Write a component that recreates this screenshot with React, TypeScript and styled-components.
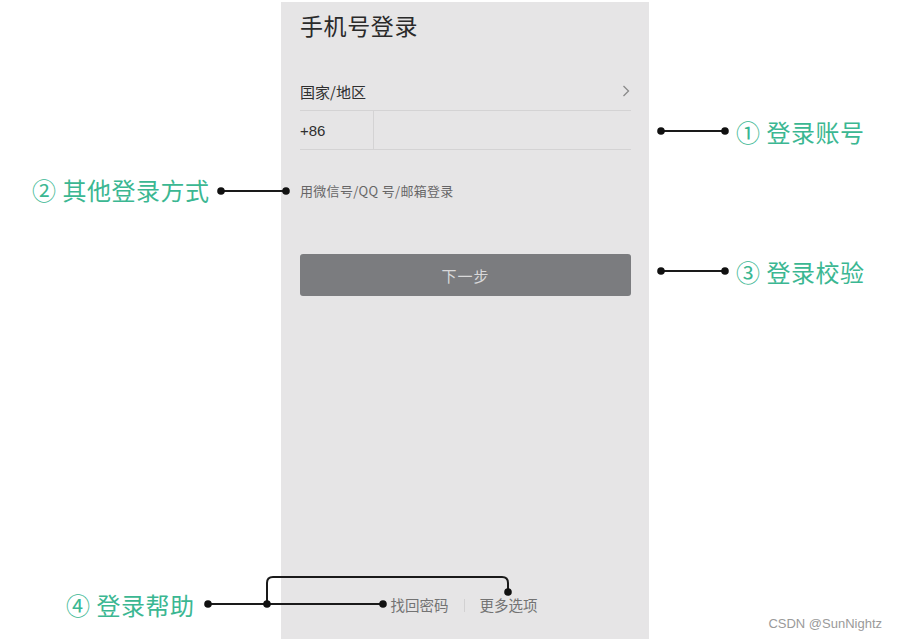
import styled, { createGlobalStyle } from 'styled-components';

const GlobalStyle = createGlobalStyle`
  html, body {
    margin: 0;
    padding: 0;
    background: #ffffff;
  }
`;

const SANS = '"Noto Sans CJK SC", "Noto Sans", sans-serif';

const Stage = styled.div`
  position: relative;
  width: 897px;
  height: 639px;
  overflow: hidden;
  display: grid;
  grid-template-columns: 281px 368px 1fr;
  font-family: ${SANS};
`;

const Panel = styled.section`
  grid-column: 2;
  margin-top: 2px;
  background: #e6e5e6;
  padding: 0 18px 0 19px;
  display: flex;
  flex-direction: column;
  color: #2f2f2f;
`;

const Title = styled.h1`
  margin: 10px 0 0;
  font-size: 23px;
  line-height: 26px;
  font-weight: 400;
  letter-spacing: 0.6px;
  color: #2a2a2a;
`;

const Row = styled.div`
  display: flex;
  align-items: center;
  height: 38px;
  border-bottom: 1px solid #d4d3d4;
  font-size: 15px;
`;

const CountryRow = styled(Row)`
  margin-top: 34px;
  justify-content: space-between;
  padding-right: 1px;
`;

const CodeCell = styled.div`
  width: 73px;
  height: 100%;
  display: flex;
  align-items: center;
  border-right: 1px solid #d4d3d4;
  font-family: "Liberation Sans", sans-serif;
`;

const AltLogin = styled.div`
  margin-top: 32px;
  font-size: 13px;
  line-height: 18px;
  color: #666566;
  letter-spacing: 0.3px;
`;

const NextButton = styled.button`
  margin-top: 54px;
  height: 42px;
  border: none;
  border-radius: 3px;
  background: #7b7c7f;
  color: #d9d9da;
  font-family: ${SANS};
  font-size: 15px;
  letter-spacing: 1px;
`;

const HelpRow = styled.div`
  margin-top: auto;
  margin-bottom: 24px;
  padding-right: 3px;
  display: flex;
  justify-content: center;
  align-items: center;
  gap: 15px;
  font-size: 14.5px;
  line-height: 20px;
  color: #737373;
`;

const Sep = styled.span`
  width: 1px;
  height: 13px;
  background: #d2d1d2;
`;

const Overlay = styled.svg`
  position: absolute;
  left: 0;
  top: 0;
  pointer-events: none;
`;

const Callout = styled.div<{ $x: number; $y: number }>`
  position: absolute;
  left: ${(p) => p.$x}px;
  top: ${(p) => p.$y}px;
  transform: translateY(-50%);
  font-size: 24px;
  line-height: 28px;
  font-weight: 400;
  color: #3bb792;
  white-space: nowrap;
  letter-spacing: 0.5px;
`;

const Watermark = styled.div`
  position: absolute;
  right: 15px;
  bottom: 8px;
  font-family: "Liberation Sans", sans-serif;
  font-size: 13px;
  color: #9a9a9a;
`;

const Chevron = () => (
  <svg width="8" height="12" viewBox="0 0 8 12">
    <polyline points="1.5,1 6.5,6 1.5,11" fill="none" stroke="#8a8a8a" strokeWidth="1.3" />
  </svg>
);

const dots: [number, number][] = [
  [661, 131], [725, 131],
  [221, 191], [286, 191],
  [661, 271], [725, 271],
  [208, 604], [267, 604], [383, 604], [508, 592],
];

const Connectors = () => (
  <Overlay width={897} height={639}>
    <g stroke="#1a1a1a" strokeWidth="2" fill="none">
      <line x1={661} y1={131} x2={725} y2={131} />
      <line x1={221} y1={191} x2={286} y2={191} />
      <line x1={661} y1={271} x2={725} y2={271} />
      <line x1={208} y1={604} x2={383} y2={604} />
      <path d="M267 604 V583 Q267 577 273 577 H502 Q508 577 508 583 V592" />
    </g>
    {dots.map(([x, y]) => (
      <circle key={`${x}-${y}`} cx={x} cy={y} r={3.8} fill="#111" />
    ))}
  </Overlay>
);

export default function App() {
  return (
    <>
      <GlobalStyle />
      <Stage>
        <Panel>
          <Title>手机号登录</Title>
          <CountryRow>
            <span>国家/地区</span>
            <Chevron />
          </CountryRow>
          <Row>
            <CodeCell>+86</CodeCell>
          </Row>
          <AltLogin>用微信号/QQ 号/邮箱登录</AltLogin>
          <NextButton>下一步</NextButton>
          <HelpRow>
            <span>找回密码</span>
            <Sep />
            <span>更多选项</span>
          </HelpRow>
        </Panel>
        <Connectors />
        <Callout $x={736} $y={132}>① 登录账号</Callout>
        <Callout $x={32} $y={190}>② 其他登录方式</Callout>
        <Callout $x={736} $y={272}>③ 登录校验</Callout>
        <Callout $x={66} $y={605}>④ 登录帮助</Callout>
        <Watermark>CSDN @SunNightz</Watermark>
      </Stage>
    </>
  );
}
